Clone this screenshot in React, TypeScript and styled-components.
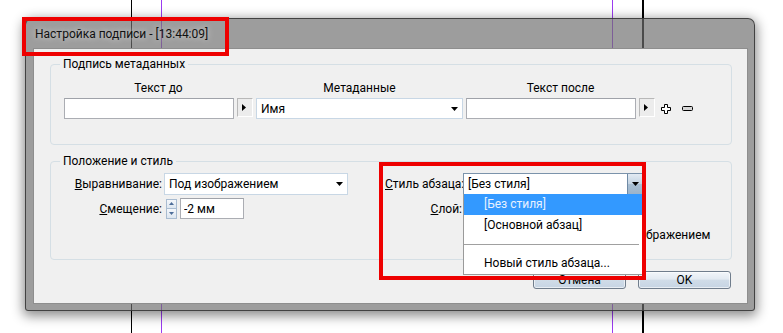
import styled, { createGlobalStyle } from "styled-components";

const GlobalStyle = createGlobalStyle`
  html, body {
    margin: 0;
    padding: 0;
    background: #fff;
  }
  body {
    font-family: Roboto, "Noto Sans", "DejaVu Sans", sans-serif;
    font-size: 12px;
    color: #000;
  }
`;

const Stage = styled.div`
  position: relative;
  width: 783px;
  height: 333px;
  overflow: hidden;
  box-sizing: border-box;
  padding: 18px 0 0 25px;
  background:
    linear-gradient(#000, #000) 131px 0 / 1px 100% no-repeat,
    linear-gradient(#9b3bf0, #9b3bf0) 161px 0 / 1px 100% no-repeat,
    linear-gradient(#9b3bf0, #9b3bf0) 612px 0 / 1px 100% no-repeat,
    linear-gradient(#000, #000) 642px 0 / 2px 100% no-repeat,
    #fff;
`;

const Window = styled.div`
  width: 730px;
  height: 293px;
  box-sizing: border-box;
  display: flex;
  flex-direction: column;
  background: rgba(110, 110, 110, 0.68);
  border: 1px solid rgba(50, 50, 50, 0.85);
  border-radius: 7px 7px 3px 3px;
  box-shadow: 0 3px 12px 2px rgba(0, 0, 0, 0.45);
`;

const TitleBar = styled.div`
  height: 29px;
  display: flex;
  align-items: center;
  padding-left: 9px;
  padding-top: 1px;
  box-sizing: border-box;
  color: #111;
  text-shadow: 0 0 6px rgba(255, 255, 255, 0.7);
  white-space: nowrap;
`;

const Content = styled.div`
  flex: 1;
  margin: 0 6px 6px 7px;
  background: #f0f0f0;
  border: 1px solid #8e8e8e;
  padding: 7px 15px 0 16px;
  display: flex;
  flex-direction: column;
`;

const Group = styled.fieldset<{ $pt: number; $pb: number }>`
  margin: 0;
  min-width: 0;
  padding: ${(p) => p.$pt}px 12px ${(p) => p.$pb}px 13px;
  border: 1px solid #d5dfe5;
  border-radius: 4px;
  & + & {
    margin-top: 8px;
  }
`;

const Legend = styled.legend`
  margin-left: -4px;
  padding: 0 3px;
  line-height: 16px;
`;

const MetaGrid = styled.div`
  display: grid;
  grid-template-columns: 170px 16px 207px 170px 16px auto;
  grid-template-rows: 16px 21px;
  column-gap: 3px;
  row-gap: 2px;
  align-items: start;
`;

const ColumnLabel = styled.div<{ $span: string }>`
  grid-row: 1;
  grid-column: ${(p) => p.$span};
  text-align: center;
  line-height: 16px;
  white-space: nowrap;
`;

const TextBox = styled.input<{ $w: number; $h?: number }>`
  width: ${(p) => p.$w}px;
  height: ${(p) => p.$h ?? 21}px;
  box-sizing: border-box;
  margin: 0;
  padding: 0 3px;
  border: 1px solid #abadb3;
  border-top-color: #9fa2a9;
  background: #fff;
  font: inherit;
  color: #000;
  outline: none;
`;

const InsertButton = styled.div`
  width: 16px;
  height: 19px;
  box-sizing: border-box;
  display: flex;
  align-items: center;
  justify-content: center;
  padding-right: 2px;
  background: #ececec;
  border: 1px solid;
  border-color: #b8b8b8 #fff #fff #b8b8b8;
`;

const Combo = styled.div<{ $w: number; $h?: number; $open?: boolean }>`
  position: relative;
  width: ${(p) => p.$w}px;
  height: ${(p) => p.$h ?? 22}px;
  box-sizing: border-box;
  display: flex;
  align-items: center;
  background: #fff;
  border: 1px solid ${(p) => (p.$open ? "#7b93ab" : "#c8d7e5")};
  padding-left: 4px;
`;

const ComboText = styled.span`
  flex: 1;
  white-space: nowrap;
  overflow: hidden;
`;

const ComboArrow = styled.span`
  width: 16px;
  align-self: stretch;
  display: flex;
  align-items: center;
  justify-content: center;
`;

const OpenArrow = styled(ComboArrow)`
  width: 14px;
  border-left: 1px solid #6f8aa5;
  background: linear-gradient(#e3ebf3, #c3d3e2 50%, #a9bfd3 50%, #9bb3ca);
`;

const Icons = styled.div`
  height: 21px;
  display: flex;
  align-items: center;
  gap: 11px;
  padding-left: 3px;
`;

const PosRow = styled.div`
  display: flex;
  align-items: flex-start;
`;

const FormGrid = styled.div<{ $label: number; $gap: number; $width?: number }>`
  display: grid;
  grid-template-columns: ${(p) => p.$label}px auto;
  column-gap: ${(p) => p.$gap}px;
  row-gap: 3px;
  align-items: center;
  ${(p) => (p.$width ? `width: ${p.$width}px;` : "")}
`;

const FieldLabel = styled.label`
  text-align: right;
  white-space: nowrap;
  line-height: 16px;
`;

const SpinField = styled.div`
  display: flex;
  align-items: center;
  gap: 3px;
  padding-left: 2px;
`;

const Spin = styled.div`
  width: 11px;
  height: 20px;
  display: flex;
  flex-direction: column;
`;

const SpinHalf = styled.div`
  flex: 1;
  box-sizing: border-box;
  display: flex;
  align-items: center;
  justify-content: center;
  border: 1px solid #a9bcd1;
  background: linear-gradient(#f4f7fb, #dde6f0);
  & + & {
    border-top: none;
  }
`;

const CheckRow = styled.div`
  grid-column: 2;
  margin-top: 5px;
  display: flex;
  align-items: center;
  gap: 10px;
  white-space: nowrap;
  line-height: 16px;
`;

const CheckBox = styled.span`
  width: 13px;
  height: 13px;
  box-sizing: border-box;
  border: 1px solid #8f8f8f;
  background: linear-gradient(135deg, #dcdcdc, #fff);
`;

const DropList = styled.div`
  position: absolute;
  z-index: 5;
  top: 100%;
  left: -1px;
  width: 180px;
  box-sizing: border-box;
  background: #fff;
  border: 1px solid #9a9a9a;
  border-top: none;
`;

const Option = styled.div<{ $active?: boolean }>`
  height: 21px;
  line-height: 21px;
  padding-left: 20px;
  white-space: nowrap;
  background: ${(p) => (p.$active ? "#3399ff" : "transparent")};
  color: ${(p) => (p.$active ? "#e8f1ff" : "#000")};
`;

const Separator = styled.div`
  height: 1px;
  margin: 8px 3px 8px 0;
  background: #a0a0a0;
`;

const ButtonRow = styled.div`
  margin-top: 11px;
  margin-right: 1px;
  display: flex;
  justify-content: flex-end;
  gap: 12px;
`;

const Button = styled.div`
  width: 93px;
  height: 18px;
  box-sizing: border-box;
  display: flex;
  align-items: center;
  justify-content: center;
  border: 1px solid #707d8c;
  border-radius: 3px;
  background: linear-gradient(#f2f6fa, #e3eaf2 45%, #d0dce8 50%, #c6d4e3);
  box-shadow: inset 0 0 0 1px rgba(255, 255, 255, 0.6);
`;

const Annotation = styled.div<{ $x: number; $y: number; $w: number; $h: number }>`
  position: absolute;
  z-index: 10;
  left: ${(p) => p.$x}px;
  top: ${(p) => p.$y}px;
  width: ${(p) => p.$w}px;
  height: ${(p) => p.$h}px;
  box-sizing: border-box;
  border: 4px solid #ee0000;
  pointer-events: none;
`;

const Caret = () => (
  <svg width="7" height="4" viewBox="0 0 7 4">
    <path d="M0 0h7L3.5 4z" fill="#000" />
  </svg>
);

const PlayArrow = () => (
  <svg width="4" height="7" viewBox="0 0 4 7">
    <path d="M0 0l4 3.5L0 7z" fill="#000" />
  </svg>
);

const SpinArrow = ({ up }: { up?: boolean }) => (
  <svg width="5" height="3" viewBox="0 0 5 3">
    <path d={up ? "M0 3h5L2.5 0z" : "M0 0h5L2.5 3z"} fill="#4d6d99" />
  </svg>
);

const PlusIcon = () => (
  <svg width="10" height="10" viewBox="0 0 10 10">
    <path
      d="M3.5.5h3v3h3v3h-3v3h-3v-3h-3v-3h3z"
      fill="#fff"
      stroke="#000"
      strokeWidth="1"
    />
  </svg>
);

const MinusIcon = () => (
  <svg width="11" height="5" viewBox="0 0 11 5">
    <rect x=".5" y=".5" width="10" height="4" rx="1" fill="#d6d6d6" stroke="#000" />
  </svg>
);

export default function App() {
  return (
    <>
      <GlobalStyle />
      <Stage>
        <Window>
          <TitleBar>Настройка подписи - [13:44:09]</TitleBar>
          <Content>
            <Group $pt={8} $pb={25}>
              <Legend>Подпись метаданных</Legend>
              <MetaGrid>
                <ColumnLabel $span="1 / 3">Текст до</ColumnLabel>
                <ColumnLabel $span="3 / 4">Метаданные</ColumnLabel>
                <ColumnLabel $span="4 / 6">Текст после</ColumnLabel>
                <ColumnLabel $span="6 / 7" />

                <TextBox $w={170} readOnly defaultValue="" />
                <InsertButton>
                  <PlayArrow />
                </InsertButton>
                <Combo $w={207} $h={21}>
                  <ComboText>Имя</ComboText>
                  <ComboArrow>
                    <Caret />
                  </ComboArrow>
                </Combo>
                <TextBox $w={170} readOnly defaultValue="" />
                <InsertButton>
                  <PlayArrow />
                </InsertButton>
                <Icons>
                  <PlusIcon />
                  <MinusIcon />
                </Icons>
              </MetaGrid>
            </Group>

            <Group $pt={4} $pb={16}>
              <Legend>Положение и стиль</Legend>
              <PosRow>
                <FormGrid $label={98} $gap={2} $width={321}>
                  <FieldLabel>
                    <u>В</u>ыравнивание:
                  </FieldLabel>
                  <Combo $w={184}>
                    <ComboText>Под изображением</ComboText>
                    <ComboArrow>
                      <Caret />
                    </ComboArrow>
                  </Combo>
                  <FieldLabel>
                    <u>С</u>мещение:
                  </FieldLabel>
                  <SpinField>
                    <Spin>
                      <SpinHalf>
                        <SpinArrow up />
                      </SpinHalf>
                      <SpinHalf>
                        <SpinArrow />
                      </SpinHalf>
                    </Spin>
                    <TextBox $w={64} readOnly defaultValue="-2 мм" />
                  </SpinField>
                </FormGrid>

                <FormGrid $label={77} $gap={1}>
                  <FieldLabel>
                    <u>С</u>тиль абзаца:
                  </FieldLabel>
                  <Combo $w={180} $open>
                    <ComboText>[Без стиля]</ComboText>
                    <OpenArrow>
                      <Caret />
                    </OpenArrow>
                    <DropList>
                      <Option $active>[Без стиля]</Option>
                      <Option>[Основной абзац]</Option>
                      <Separator />
                      <Option>Новый стиль абзаца...</Option>
                    </DropList>
                  </Combo>
                  <FieldLabel>
                    <u>С</u>лой:
                  </FieldLabel>
                  <Combo $w={180} $h={21}>
                    <ComboText />
                    <ComboArrow>
                      <Caret />
                    </ComboArrow>
                  </Combo>
                  <CheckRow>
                    <CheckBox />
                    Группировать подпись с изображением
                  </CheckRow>
                </FormGrid>
              </PosRow>
            </Group>

            <ButtonRow>
              <Button>Отмена</Button>
              <Button>OK</Button>
            </ButtonRow>
          </Content>
        </Window>

        <Annotation $x={22} $y={17} $w={207} $h={39} />
        <Annotation $x={379} $y={162} $w={267} $h={118} />
      </Stage>
    </>
  );
}
